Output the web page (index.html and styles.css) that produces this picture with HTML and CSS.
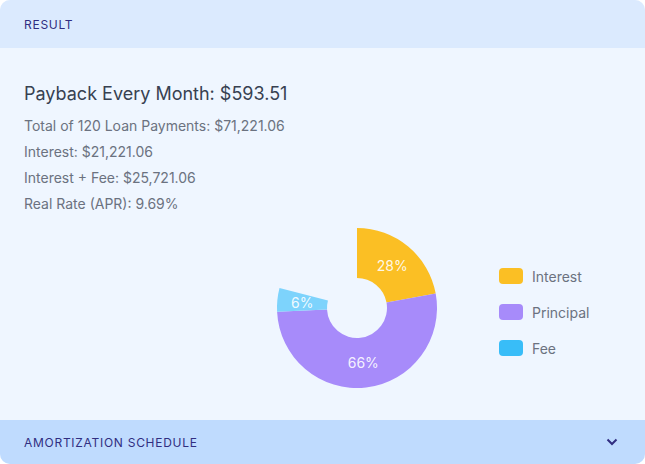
FILE: index.html
```html
<!DOCTYPE html>
<html lang="en">
<head>
  <meta charset="UTF-8">
  <title>Loan Result</title>
  <link rel="stylesheet" href="styles.css">
</head>
<body>
  <div class="card">
    <div class="card-header">Result</div>

    <div class="card-body">
      <h2 class="payback">Payback Every Month: $593.51</h2>
      <p class="line">Total of 120 Loan Payments: $71,221.06</p>
      <p class="line">Interest: $21,221.06</p>
      <p class="line">Interest + Fee: $25,721.06</p>
      <p class="line">Real Rate (APR): 9.69%</p>

      <div class="chart-row">
        <svg class="pie" width="170" height="170" viewBox="0 0 170 170">
          <path fill="#fbbf24" d="M85 5 A80 80 0 0 1 163.69 70.56 L114.51 79.58 A30 30 0 0 0 85 55 Z"/>
          <path fill="#a78bfa" d="M163.69 70.56 A80 80 0 1 1 5.09 88.77 L55.03 86.41 A30 30 0 1 0 114.51 79.58 Z"/>
          <path fill="#7dd3fc" d="M5.09 88.77 A80 80 0 0 1 7.51 65.10 L55.94 77.54 A30 30 0 0 0 55.03 86.41 Z"/>
          <text x="120.2" y="42.7">28%</text>
          <text x="91.3" y="139.6">66%</text>
          <text x="30.3" y="79.4">6%</text>
        </svg>

        <ul class="legend">
          <li><span class="swatch interest"></span>Interest</li>
          <li><span class="swatch principal"></span>Principal</li>
          <li><span class="swatch fee"></span>Fee</li>
        </ul>
      </div>
    </div>

    <div class="card-footer">
      <span>Amortization Schedule</span>
      <svg class="chevron" width="12" height="8" viewBox="0 0 12 8">
        <path d="M1.5 1.5 L6 6 L10.5 1.5" fill="none" stroke="#312e81" stroke-width="2"/>
      </svg>
    </div>
  </div>
</body>
</html>
```

FILE: styles.css
```css
body {
  margin: 0;
  font-family: Inter, 'Noto Sans', sans-serif;
  background-color: #ffffff;
}

.card {
  width: 645px;
  height: 464px;
  display: flex;
  flex-direction: column;
  border-radius: 10px;
  overflow: hidden;
  background-color: #eff6ff;
}

.card-header {
  height: 48px;
  padding: 0 24px;
  display: flex;
  align-items: center;
  background-color: #dbeafe;
  color: #312e81;
  font-size: 12px;
  font-weight: 400;
  letter-spacing: 0.06em;
  text-transform: uppercase;
}

.card-body {
  flex: 1;
  padding: 32px 24px 0;
}

.payback {
  margin: 0 0 5px;
  font-size: 18px;
  line-height: 28px;
  font-weight: 400;
  color: #374151;
}

.line {
  margin: 0;
  font-size: 14px;
  line-height: 26px;
  color: #6b7280;
}

.chart-row {
  display: flex;
  align-items: flex-start;
  gap: 57px;
  margin-top: 5.5px;
  padding-left: 248px;
}

.pie text {
  fill: #ffffff;
  fill-opacity: 0.9;
  font-size: 14px;
  text-anchor: middle;
  dominant-baseline: central;
}

.legend {
  list-style: none;
  margin: 43.5px 0 0;
  padding: 0;
  display: flex;
  flex-direction: column;
  gap: 16px;
}

.legend li {
  display: flex;
  align-items: center;
  gap: 9px;
  height: 20px;
  font-size: 14px;
  color: #6b7280;
}

.swatch {
  width: 24px;
  height: 16px;
  border-radius: 4px;
}

.swatch.interest { background-color: #fbbf24; }
.swatch.principal { background-color: #a78bfa; }
.swatch.fee { background-color: #38bdf8; }

.card-footer {
  height: 44px;
  padding: 0 27px 0 24px;
  display: flex;
  align-items: center;
  justify-content: space-between;
  background-color: #bfdbfe;
  color: #312e81;
  font-size: 12px;
  font-weight: 400;
  letter-spacing: 0.06em;
  text-transform: uppercase;
}
```
